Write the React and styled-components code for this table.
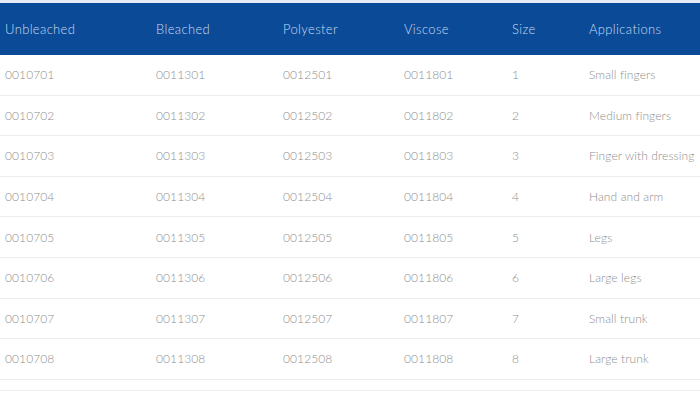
import React from 'react';
import styled, { createGlobalStyle } from 'styled-components';

const GlobalStyle = createGlobalStyle`
  html, body {
    margin: 0;
    padding: 0;
    background: #ffffff;
    overflow: hidden;
  }
`;

const COLS = '151px 127px 121px 108px 77px 1fr';

const Page = styled.div`
  width: 700px;
  height: 397px;
  box-sizing: border-box;
  background: #ffffff;
  font-family: Lato, "Noto Sans", sans-serif;
  border-top: 3px solid #e6ecf3;
`;

const HeaderRow = styled.div`
  display: grid;
  grid-template-columns: ${COLS};
  align-items: center;
  height: 52px;
  padding-left: 5px;
  background: #0b4a96;
  color: #c8dbf3;
  font-size: 13px;
  font-weight: 300;
  letter-spacing: 0.35px;
`;

const Row = styled.div`
  display: grid;
  grid-template-columns: ${COLS};
  align-items: center;
  height: 40.6px;
  box-sizing: border-box;
  padding-left: 5px;
  border-bottom: 1.5px solid #ececec;
  color: #8e8e8e;
  font-size: 12px;
  font-weight: 300;
  letter-spacing: 0.1px;
`;

const Cell = styled.div`
  white-space: nowrap;
`;

const Footer = styled.div`
  height: 10px;
  border-bottom: 1.5px solid #efefef;
`;

const headers = ['Unbleached', 'Bleached', 'Polyester', 'Viscose', 'Size', 'Applications'];

const apps = [
  'Small fingers',
  'Medium fingers',
  'Finger with dressing',
  'Hand and arm',
  'Legs',
  'Large legs',
  'Small trunk',
  'Large trunk',
];

const rows = apps.map((app, i) => {
  const n = i + 1;
  return [`001070${n}`, `001130${n}`, `001250${n}`, `001180${n}`, String(n), app];
});

export default function App() {
  return (
    <>
      <GlobalStyle />
      <Page>
        <HeaderRow>
          {headers.map((h) => (
            <Cell key={h}>{h}</Cell>
          ))}
        </HeaderRow>
        {rows.map((r) => (
          <Row key={r[0]}>
            {r.map((c, j) => (
              <Cell key={j}>{c}</Cell>
            ))}
          </Row>
        ))}
        <Footer />
      </Page>
    </>
  );
}
